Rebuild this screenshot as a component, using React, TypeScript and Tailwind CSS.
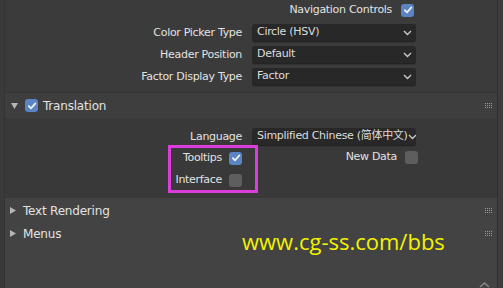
import React from 'react';

const font = { fontFamily: '"DejaVu Sans", "Noto Sans CJK SC", sans-serif' };

const Check = ({ on }: { on: boolean }) =>
  on ? (
    <div className="w-[13px] h-[13px] rounded-[3px] bg-[#5b84c4] flex items-center justify-center">
      <svg width="10" height="10" viewBox="0 0 10 10">
        <path d="M1.8 5.2 L4 7.4 L8.4 2.4" stroke="#f2f2f2" strokeWidth="1.7" fill="none" strokeLinecap="round" strokeLinejoin="round" />
      </svg>
    </div>
  ) : (
    <div className="w-[13px] h-[13px] rounded-[3px] bg-[#5e5e5e]" />
  );

const Chevron = () => (
  <svg width="9" height="6" viewBox="0 0 9 6" className="shrink-0">
    <path d="M1 1 L4.5 4.5 L8 1" stroke="#c8c8c8" strokeWidth="1.4" fill="none" />
  </svg>
);

const Select = ({ value }: { value: string }) => (
  <div className="w-[164px] h-[18px] rounded-[3px] bg-[#282828] border-b border-[#232323] shadow-[0_1px_0_#333] flex items-center justify-between pl-[5px] pr-[4px] text-[11px] tracking-[-0.3px] text-[#dcdcdc] whitespace-nowrap overflow-hidden">
    <span>{value}</span>
    <Chevron />
  </div>
);

const Label = ({ children }: { children: React.ReactNode }) => (
  <div className="w-[237px] text-right text-[11px] tracking-[-0.3px] text-[#e2e2e2]">{children}</div>
);

const Grip = () => (
  <div className="grid grid-cols-4 gap-x-[1px] gap-y-[1px] mr-[5px]">
    {Array.from({ length: 12 }).map((_, i) => (
      <div key={i} className="w-[1px] h-[1px] bg-[#9a9a9a]" />
    ))}
  </div>
);

const Tri = ({ open }: { open: boolean }) =>
  open ? (
    <svg width="7" height="6" viewBox="0 0 7 6"><path d="M0 0 L7 0 L3.5 6 Z" fill="#b5b5b5" /></svg>
  ) : (
    <svg width="6" height="7" viewBox="0 0 6 7"><path d="M0 0 L6 3.5 L0 7 Z" fill="#b5b5b5" /></svg>
  );

const small = 'text-[11px] tracking-[-0.3px] text-[#e2e2e2]';
const head = 'text-[12px] tracking-[-0.2px] text-[#e2e2e2]';

export default function App() {
  return (
    <div className="w-[503px] h-[288px] bg-[#3a3a3a] overflow-hidden relative" style={font}>
      <div className="flex h-full">
        <div className="w-[5px] border-r border-[#333]" />
        <div className="flex-1 flex flex-col">
          {/* Previous sub-panel content */}
          <div className="bg-[#3b3b3b] h-[92px] flex flex-col pt-[3px]">
            <div className="h-[14px] flex items-center justify-end pr-[83px] gap-[9px]">
              <span className={small}>Navigation Controls</span>
              <Check on />
            </div>
            <div className="flex flex-col gap-[4px] mt-[7px]">
              <div className="flex items-center gap-[10px]"><Label>Color Picker Type</Label><Select value="Circle (HSV)" /></div>
              <div className="flex items-center gap-[10px]"><Label>Header Position</Label><Select value="Default" /></div>
              <div className="flex items-center gap-[10px]"><Label>Factor Display Type</Label><Select value="Factor" /></div>
            </div>
          </div>

          {/* Translation header */}
          <div className="h-[26px] bg-[#3e3e3e] border-t border-[#363636] flex items-center">
            <div className="ml-[4px] w-[10px] flex justify-center"><Tri open /></div>
            <div className="ml-[6px]"><Check on /></div>
            <span className={`ml-[5px] ${head}`}>Translation</span>
            <div className="flex-1" />
            <Grip />
          </div>

          {/* Translation content */}
          <div className="bg-[#393939] h-[79px] flex flex-col pt-[10px]">
            <div className="flex items-center gap-[10px]"><Label>Language</Label><Select value="Simplified Chinese (简体中文)" /></div>
            <div className="flex -mt-[1px]">
              <div className="w-[163px]" />
              <div className="w-[90px] h-[48px] border-[3px] border-[#dd3cdd] flex flex-col items-end pr-[13px] pt-[3px] gap-[8px]">
                <div className="flex items-center gap-[7px] h-[14px]">
                  <span className={small}>Tooltips</span>
                  <Check on />
                </div>
                <div className="flex items-center gap-[7px] h-[14px]">
                  <span className={small}>Interface</span>
                  <Check on={false} />
                </div>
              </div>
              <div className="flex-1 flex justify-end pr-[79px] pt-[5px]">
                <div className="flex items-center gap-[8px] h-[14px]">
                  <span className={small}>New Data</span>
                  <Check on={false} />
                </div>
              </div>
            </div>
          </div>

          {/* Collapsed panels */}
          <div className="flex-1 bg-[#434343] border-t border-[#383838] flex flex-col pt-[1px]">
            <div className="h-[23px] flex items-center">
              <div className="ml-[5px] w-[8px]"><Tri open={false} /></div>
              <span className={`ml-[5px] ${head}`}>Text Rendering</span>
              <div className="flex-1" />
              <Grip />
            </div>
            <div className="h-[23px] flex items-center">
              <div className="ml-[5px] w-[8px]"><Tri open={false} /></div>
              <span className={`ml-[5px] ${head}`}>Menus</span>
              <div className="flex-1" />
              <Grip />
            </div>
          </div>
        </div>
        <div className="w-[6px] border-l border-[#2f2f2f] bg-[#3d3d3d]" />
      </div>

      {/* watermark */}
      <div className="absolute left-[242px] top-[230px] text-[22px] text-[#f2f200] leading-none" style={{ fontFamily: '"Open Sans", sans-serif' }}>
        www.cg-ss.com/bbs
      </div>
      <svg className="absolute left-[478px] top-[281px]" width="13" height="7" viewBox="0 0 13 7">
        <path d="M2 6 L6.5 2 L11 6" stroke="#8a8a8a" strokeWidth="1.5" fill="none" />
      </svg>
    </div>
  );
}
